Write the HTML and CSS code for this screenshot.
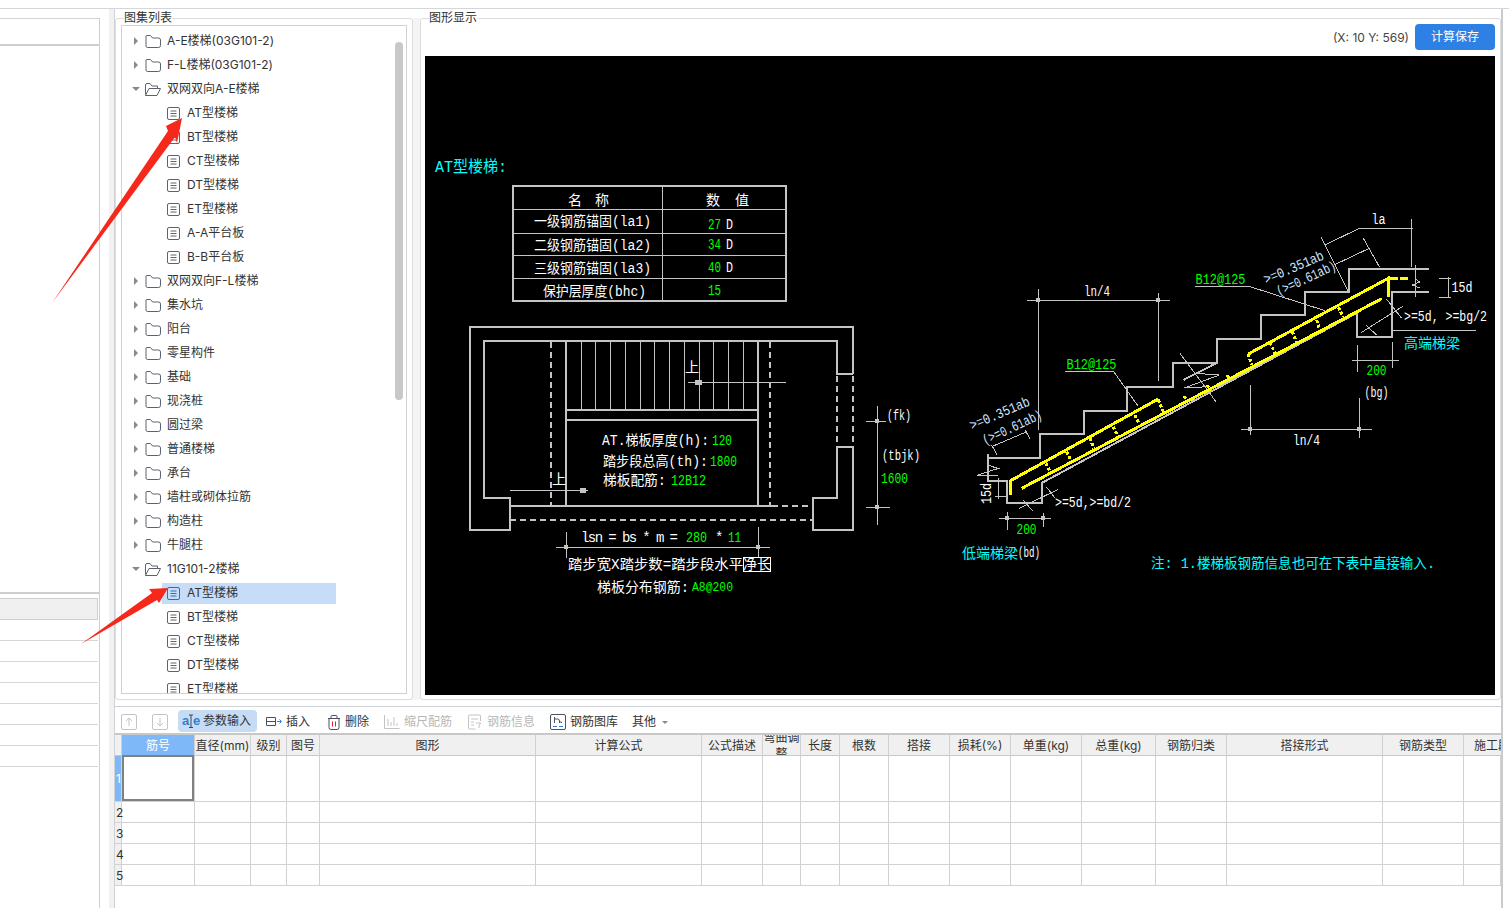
FILE: index.html
```html
<!DOCTYPE html>
<html lang="zh-CN">
<head>
<meta charset="utf-8">
<title>钢筋图库</title>
<link rel="stylesheet" href="styles.css">
</head>
<body>
<div class="app">
  <aside class="stub">
    <div class="stub-in">
      <div class="stub-top"></div>
      <div class="stub-table">
        <div class="stub-head"></div>
        <div class="stub-row"></div><div class="stub-row"></div><div class="stub-row"></div><div class="stub-row"></div>
        <div class="stub-row"></div><div class="stub-row"></div><div class="stub-row"></div>
      </div>
    </div>
  </aside>
  <div class="stub-gap"></div>
  <div class="sash"></div>
  <main class="main">
    <div class="top">
      <section class="panel tree-panel">
        <span class="legend">图集列表</span>
        <div class="tree">
          <div class="node"><svg class="caret"><use href="#i-right"/></svg><svg class="folder"><use href="#i-folder"/></svg><span>A-E楼梯(03G101-2)</span></div>
          <div class="node"><svg class="caret"><use href="#i-right"/></svg><svg class="folder"><use href="#i-folder"/></svg><span>F-L楼梯(03G101-2)</span></div>
          <div class="node"><svg class="caret caret-open"><use href="#i-down"/></svg><svg class="folder"><use href="#i-open"/></svg><span>双网双向A-E楼梯</span></div>
          <div class="leaf"><div class="leaf-in"><svg class="file"><use href="#i-file"/></svg><span>AT型楼梯</span></div></div>
          <div class="leaf"><div class="leaf-in"><svg class="file"><use href="#i-file"/></svg><span>BT型楼梯</span></div></div>
          <div class="leaf"><div class="leaf-in"><svg class="file"><use href="#i-file"/></svg><span>CT型楼梯</span></div></div>
          <div class="leaf"><div class="leaf-in"><svg class="file"><use href="#i-file"/></svg><span>DT型楼梯</span></div></div>
          <div class="leaf"><div class="leaf-in"><svg class="file"><use href="#i-file"/></svg><span>ET型楼梯</span></div></div>
          <div class="leaf"><div class="leaf-in"><svg class="file"><use href="#i-file"/></svg><span>A-A平台板</span></div></div>
          <div class="leaf"><div class="leaf-in"><svg class="file"><use href="#i-file"/></svg><span>B-B平台板</span></div></div>
          <div class="node"><svg class="caret"><use href="#i-right"/></svg><svg class="folder"><use href="#i-folder"/></svg><span>双网双向F-L楼梯</span></div>
          <div class="node"><svg class="caret"><use href="#i-right"/></svg><svg class="folder"><use href="#i-folder"/></svg><span>集水坑</span></div>
          <div class="node"><svg class="caret"><use href="#i-right"/></svg><svg class="folder"><use href="#i-folder"/></svg><span>阳台</span></div>
          <div class="node"><svg class="caret"><use href="#i-right"/></svg><svg class="folder"><use href="#i-folder"/></svg><span>零星构件</span></div>
          <div class="node"><svg class="caret"><use href="#i-right"/></svg><svg class="folder"><use href="#i-folder"/></svg><span>基础</span></div>
          <div class="node"><svg class="caret"><use href="#i-right"/></svg><svg class="folder"><use href="#i-folder"/></svg><span>现浇桩</span></div>
          <div class="node"><svg class="caret"><use href="#i-right"/></svg><svg class="folder"><use href="#i-folder"/></svg><span>圆过梁</span></div>
          <div class="node"><svg class="caret"><use href="#i-right"/></svg><svg class="folder"><use href="#i-folder"/></svg><span>普通楼梯</span></div>
          <div class="node"><svg class="caret"><use href="#i-right"/></svg><svg class="folder"><use href="#i-folder"/></svg><span>承台</span></div>
          <div class="node"><svg class="caret"><use href="#i-right"/></svg><svg class="folder"><use href="#i-folder"/></svg><span>墙柱或砌体拉筋</span></div>
          <div class="node"><svg class="caret"><use href="#i-right"/></svg><svg class="folder"><use href="#i-folder"/></svg><span>构造柱</span></div>
          <div class="node"><svg class="caret"><use href="#i-right"/></svg><svg class="folder"><use href="#i-folder"/></svg><span>牛腿柱</span></div>
          <div class="node"><svg class="caret caret-open"><use href="#i-down"/></svg><svg class="folder"><use href="#i-open"/></svg><span>11G101-2楼梯</span></div>
          <div class="leaf"><div class="leaf-in selected"><svg class="file file-sel"><use href="#i-file"/></svg><span>AT型楼梯</span></div></div>
          <div class="leaf"><div class="leaf-in"><svg class="file"><use href="#i-file"/></svg><span>BT型楼梯</span></div></div>
          <div class="leaf"><div class="leaf-in"><svg class="file"><use href="#i-file"/></svg><span>CT型楼梯</span></div></div>
          <div class="leaf"><div class="leaf-in"><svg class="file"><use href="#i-file"/></svg><span>DT型楼梯</span></div></div>
          <div class="leaf"><div class="leaf-in"><svg class="file"><use href="#i-file"/></svg><span>ET型楼梯</span></div></div>
          <div class="scrollbar"></div>
        </div>
      </section>
      <div class="divider"></div>
      <section class="panel view-panel">
        <span class="legend">图形显示</span>
        <div class="view-head">
          <span class="coords">(X: 10 Y: 569)</span>
          <button class="save">计算保存</button>
        </div>
        <svg class="cad" viewBox="425 56 1070 639" xmlns="http://www.w3.org/2000/svg">
          <g class="lt">
            <path class="t2" d="M513 186H786V301H513Z"/>
            <path class="t1" d="M662 186V301M513 209H786M513 233H786M513 255.500H786M513 278H786"/>
            <!-- plan -->
            <path class="t2" d="M853 374V327H470V530H510V498H484V341H836.500V374H853M510 498V530"/>
            <path class="t2" d="M853 447V530H813V498H836.500V447H853ZM813 498V530"/>
            <path class="t2 dash" d="M836.500 376V446M853 376V446M551 342V505M770 342V505M772 506H813M510 520H813"/>
            <path class="t2" d="M510 506H772M566 341V506M758 341V506M566 410H758M566 420H758"/>
            <path class="t1" d="M581.500 341V410M595.500 341V410M610.500 341V410M625.500 341V410M640.500 341V410M654.500 341V410M669.500 341V410M684.500 341V410M699.500 341V410M713.500 341V410M728.500 341V410M743.500 341V410"/>
            <path class="t1" d="M688 382H786M510 490H588M877 406V525M866 421H886M866 507H890M566 532V558M758 527V557M556 547H770"/>
            <path class="fill" d="M695 380h7v5h-7zM580 488h6v5h-6zM875 419h4v4h-4zM875 505h4v4h-4zM564 545h4v4h-4zM756 545h4v4h-4z"/>
            <!-- section stair -->
            <path class="t2" d="M987.700 454V481H1007.300V503H1041.700V483L1356.700 313V336.700H1392V292H1429M987.700 457.700H1040V434H1084V410.700H1126.700V387H1172.700V363H1216.700V339H1261V315H1305V292.300H1349V268.700H1429"/>
            <path class="t1" d="M1392 330H1476M1038.300 289V430M1158.300 292.700V380.700M1027.300 300H1170M1065 371H1113.300L1138 406M993.300 446L1026.700 431.700M991.500 445L997 454.500M1025 430L1030 438.500M976.700 475.500L998 468.500L987.700 465M976.700 475.500H998M998.300 477.700V499.300M995 496H1007M999.300 518.300H1050.700M1007.300 512V530M1043.300 513V527M1046.700 487.300L1055 498M1019.300 508.300L1058.300 489.300M1023 500L1032.700 511"/>
            <path class="t1" d="M1180 353.300L1216 401.700M1195 373.300L1219.300 375L1184.300 388L1208 386.700"/>
            <path class="t2" d="M1183.300 380L1216.700 363"/>
            <path class="t1" d="M1359.300 228.300H1413.300M1359.300 228.300L1325 245M1320.700 236.700L1347.700 290.700M1334 265L1369.300 248.300M1363.300 238.300L1379.300 266.700M1411.300 219.300V266.700M1415.700 265V296.700M1448.300 277.300V297.300M1439.300 278.300H1450.700M1439.300 297.300H1450.700M1386.700 299.300L1401.700 318.300M1361 332.700L1403.300 306M1365.700 325L1376.700 335M1357.300 345V371.700M1392.700 341.700V368.300M1352 360.300H1399M1250 385V435M1359.300 398V438.300M1241 429.300H1372M1195 286H1248L1325 310.700M1415 279L1420 282L1412 285L1420 288"/>
            <path class="fill" d="M1036.300 298h4v4h-4zM1156.300 298h4v4h-4zM1005.300 516.300h4v4h-4zM1041.300 516.300h4v4h-4zM1248 427.300h4v4h-4zM1357.300 427.300h4v4h-4z"/>
          </g>
          <g class="rebar">
            <path d="M1010 495V481L1158.300 399M1021.700 488.300L1381.700 298.700M1248.300 354L1388.300 278.300V297M1388.300 278.300H1398M1400 278.300H1408"/>
            <path class="tie" d="M1046 463.300L1050 471.700M1066.700 451.700L1070.700 460M1090 438.300L1094 448.300M1113.300 426.700L1117.700 436M1135 415L1139 424M1158.300 400L1163.300 411.700M1248.300 354L1251.700 365M1270 342.700L1275 353.300M1292.300 331.700L1296.700 342.700M1316.700 320L1320 330.700M1338.300 307.300L1343.300 316.700"/>
            <path class="tie" d="M1184 396L1186 399M1207 385L1209 388M1227 375L1229 378"/>
          </g>
          <g class="txt">
            <text class="cy s16" x="435" y="172" textLength="72" lengthAdjust="spacingAndGlyphs">AT型楼梯:</text>
            <text class="wh s14" x="568" y="205">名</text><text class="wh s14" x="595" y="205">称</text>
            <text class="wh s14" x="706" y="205">数</text><text class="wh s14" x="735" y="205">值</text>
            <text class="wh s14" x="534" y="226" textLength="117" lengthAdjust="spacingAndGlyphs">一级钢筋锚固(la1)</text>
            <text class="wh s14" x="534" y="250" textLength="117" lengthAdjust="spacingAndGlyphs">二级钢筋锚固(la2)</text>
            <text class="wh s14" x="534" y="273" textLength="117" lengthAdjust="spacingAndGlyphs">三级钢筋锚固(la3)</text>
            <text class="wh s14" x="543" y="296" textLength="103" lengthAdjust="spacingAndGlyphs">保护层厚度(bhc)</text>
            <text class="gr s14" x="708" y="229" textLength="13" lengthAdjust="spacingAndGlyphs">27</text><text class="wh s14" x="726" y="229" textLength="7" lengthAdjust="spacingAndGlyphs">D</text>
            <text class="gr s14" x="708" y="249" textLength="13" lengthAdjust="spacingAndGlyphs">34</text><text class="wh s14" x="726" y="249" textLength="7" lengthAdjust="spacingAndGlyphs">D</text>
            <text class="gr s14" x="708" y="272" textLength="13" lengthAdjust="spacingAndGlyphs">40</text><text class="wh s14" x="726" y="272" textLength="7" lengthAdjust="spacingAndGlyphs">D</text>
            <text class="gr s14" x="708" y="295" textLength="13" lengthAdjust="spacingAndGlyphs">15</text>
            <text class="wh s14" x="685" y="372">上</text>
            <text class="wh s14" x="552" y="484">上</text>
            <text class="wh s14" x="602" y="445" textLength="107" lengthAdjust="spacingAndGlyphs">AT.梯板厚度(h):</text><text class="gr s14" x="712" y="445" textLength="20" lengthAdjust="spacingAndGlyphs">120</text>
            <text class="wh s14" x="603" y="466" textLength="105" lengthAdjust="spacingAndGlyphs">踏步段总高(th):</text><text class="gr s14" x="710" y="466" textLength="27" lengthAdjust="spacingAndGlyphs">1800</text>
            <text class="wh s14" x="603" y="485" textLength="63" lengthAdjust="spacingAndGlyphs">梯板配筋:</text><text class="gr s14" x="671" y="485" textLength="35" lengthAdjust="spacingAndGlyphs">12B12</text>
            <text class="wh s14" x="887" y="420" textLength="24" lengthAdjust="spacingAndGlyphs">(fk)</text>
            <text class="wh s14" x="882" y="460" textLength="38" lengthAdjust="spacingAndGlyphs">(tbjk)</text>
            <text class="gr s14" x="881" y="483" textLength="27" lengthAdjust="spacingAndGlyphs">1600</text>
            <text class="wh s14" x="581" y="542" textLength="97" xml:space="preserve">lsn = bs * m =</text><text class="gr s14" x="686" y="542" textLength="21" lengthAdjust="spacingAndGlyphs">280</text><text class="wh s14" x="715" y="542">*</text><text class="gr s14" x="728" y="542" textLength="13" lengthAdjust="spacingAndGlyphs">11</text>
            <text class="wh s14" x="568" y="569" textLength="175" lengthAdjust="spacingAndGlyphs">踏步宽X踏步数=踏步段水平</text>
            <rect class="boxw" x="743.500" y="557.500" width="27" height="14"/>
            <text class="wh s14" x="743" y="569">净长</text>
            <text class="wh s14" x="597" y="592" textLength="92" lengthAdjust="spacingAndGlyphs">梯板分布钢筋:</text><text class="gr s12" x="692" y="591" textLength="41" lengthAdjust="spacingAndGlyphs">A8@200</text>

            <text class="wh s14" x="1084" y="296" textLength="26" lengthAdjust="spacingAndGlyphs">ln/4</text>
            <text class="gr s14" x="1066.500" y="369" textLength="50" lengthAdjust="spacingAndGlyphs">B12@125</text>
            <text class="bl s14" x="972" y="430" textLength="64" lengthAdjust="spacingAndGlyphs" transform="rotate(-23 972 430)">&gt;=0.351ab</text>
            <text class="bl s14" x="985" y="445" textLength="64" lengthAdjust="spacingAndGlyphs" transform="rotate(-25 985 445)">(&gt;=0.61ab)</text>
            <text class="wh s14" x="991" y="504" textLength="21" lengthAdjust="spacingAndGlyphs" transform="rotate(-90 991 504)">15d</text>
            <text class="gr s14" x="1016.500" y="534" textLength="20" lengthAdjust="spacingAndGlyphs">200</text>
            <text class="wh s14" x="1055" y="507" textLength="76" lengthAdjust="spacingAndGlyphs">&gt;=5d,&gt;=bd/2</text>
            <text class="cy s14" x="962" y="558">低端梯梁</text><text class="wh s14" x="1018" y="557" textLength="22" lengthAdjust="spacingAndGlyphs">(bd)</text>
            <text class="cy s14" x="1151" y="568" textLength="284" lengthAdjust="spacingAndGlyphs">注: 1.楼梯板钢筋信息也可在下表中直接输入.</text>

            <text class="wh s14" x="1371.500" y="224" textLength="14" lengthAdjust="spacingAndGlyphs">la</text>
            <text class="gr s14" x="1195.500" y="284" textLength="50" lengthAdjust="spacingAndGlyphs">B12@125</text>
            <text class="bl s14" x="1266" y="284" textLength="64" lengthAdjust="spacingAndGlyphs" transform="rotate(-23 1266 284)">&gt;=0.351ab</text>
            <text class="bl s14" x="1279" y="296" textLength="64" lengthAdjust="spacingAndGlyphs" transform="rotate(-25 1279 296)">(&gt;=0.61ab)</text>
            <text class="wh s14" x="1451.500" y="292" textLength="21" lengthAdjust="spacingAndGlyphs">15d</text>
            <text class="wh s14" x="1404" y="321" textLength="83" xml:space="preserve" lengthAdjust="spacingAndGlyphs">&gt;=5d, &gt;=bg/2</text>
            <text class="cy s14" x="1404" y="348">高端梯梁</text>
            <text class="gr s14" x="1366.500" y="375" textLength="20" lengthAdjust="spacingAndGlyphs">200</text>
            <text class="wh s14" x="1364.500" y="397" textLength="24" lengthAdjust="spacingAndGlyphs">(bg)</text>
            <text class="wh s14" x="1293" y="445" textLength="27" lengthAdjust="spacingAndGlyphs">ln/4</text>
          </g>
        </svg>
      </section>
    </div>
    <section class="bottom">
      <div class="toolbar">
        <span class="tool t-up"><svg class="ico16 off"><use href="#i-up"/></svg></span>
        <span class="tool t-dn"><svg class="ico16 off"><use href="#i-dn"/></svg></span>
        <span class="tool t-act"><svg class="ico-ae" viewBox="0 0 18 16"><text class="ae" x="0" y="12">a</text><path class="ae-i" d="M7 2h4M7 14.500h4M9 2v12.500"/><text class="ae" x="11" y="12">e</text></svg>参数输入</span>
        <span class="tool t-ins"><svg class="ico16"><path class="ln" d="M.5 3.500h9v8h-9zM.5 7.500h9"/><path class="bl-ln" d="M11 7.500h4M13.500 5.500l2 2-2 2"/></svg>插入</span>
        <span class="tool t-del"><svg class="ico16"><path class="ln" d="M2 4.500h12M5 4.500V2.500q0-1 1-1h4q1 0 1 1v2M3 4.500v9q0 2 2 2h6q2 0 2-2v-9"/><path class="red-ln" d="M6.500 7.500v5M9.500 7.500v5"/></svg>删除</span>
        <span class="tool t-off t-chart"><svg class="ico16 off"><path d="M.5 1v13.500h15M4 5v7M7 8v4M10 3v9M13 9v3"/></svg>缩尺配筋</span>
        <span class="tool t-off t-info"><svg class="ico16 off"><path d="M13.500 7V2q0-1-1-1h-10q-1 0-1 1v12q0 1 1 1h6M4 5h7M4 8h3M4 11h3M9 9h5l-2 2v3"/></svg>钢筋信息</span>
        <span class="tool t-lib"><svg class="ico16"><path class="ln" d="M2 .5h12q1.500 0 1.500 1.500v12q0 1.500-1.500 1.500H2Q.5 15.500.5 14V2Q.5.500 2 .5zM4.500 3v6M4.500 5h3q2 0 2 2v2M9.500 8h2v1"/><path class="bl-ln" d="M3 12.500h4M9 12.500h4"/></svg>钢筋图库</span>
        <span class="tool t-more">其他<i class="more-caret"></i></span>
      </div>
      <div class="grid">
        <div class="c hd"></div><div class="c hd cur">筋号</div><div class="c hd">直径(mm)</div><div class="c hd">级别</div><div class="c hd">图号</div><div class="c hd">图形</div><div class="c hd">计算公式</div><div class="c hd">公式描述</div><div class="c hd wrap">弯曲调整</div><div class="c hd">长度</div><div class="c hd">根数</div><div class="c hd">搭接</div><div class="c hd">损耗(%)</div><div class="c hd">单重(kg)</div><div class="c hd">总重(kg)</div><div class="c hd">钢筋归类</div><div class="c hd">搭接形式</div><div class="c hd">钢筋类型</div><div class="c hd clip">施工段</div>
        <div class="c num cur">1</div><div class="c active"></div><div class="c"></div><div class="c"></div><div class="c"></div><div class="c"></div><div class="c"></div><div class="c"></div><div class="c"></div><div class="c"></div><div class="c"></div><div class="c"></div><div class="c"></div><div class="c"></div><div class="c"></div><div class="c"></div><div class="c"></div><div class="c"></div><div class="c"></div>
        <div class="c num">2</div><div class="c"></div><div class="c"></div><div class="c"></div><div class="c"></div><div class="c"></div><div class="c"></div><div class="c"></div><div class="c"></div><div class="c"></div><div class="c"></div><div class="c"></div><div class="c"></div><div class="c"></div><div class="c"></div><div class="c"></div><div class="c"></div><div class="c"></div><div class="c"></div>
        <div class="c num">3</div><div class="c"></div><div class="c"></div><div class="c"></div><div class="c"></div><div class="c"></div><div class="c"></div><div class="c"></div><div class="c"></div><div class="c"></div><div class="c"></div><div class="c"></div><div class="c"></div><div class="c"></div><div class="c"></div><div class="c"></div><div class="c"></div><div class="c"></div><div class="c"></div>
        <div class="c num">4</div><div class="c"></div><div class="c"></div><div class="c"></div><div class="c"></div><div class="c"></div><div class="c"></div><div class="c"></div><div class="c"></div><div class="c"></div><div class="c"></div><div class="c"></div><div class="c"></div><div class="c"></div><div class="c"></div><div class="c"></div><div class="c"></div><div class="c"></div><div class="c"></div>
        <div class="c num">5</div><div class="c"></div><div class="c"></div><div class="c"></div><div class="c"></div><div class="c"></div><div class="c"></div><div class="c"></div><div class="c"></div><div class="c"></div><div class="c"></div><div class="c"></div><div class="c"></div><div class="c"></div><div class="c"></div><div class="c"></div><div class="c"></div><div class="c"></div><div class="c"></div>
      </div>
    </section>
  </main>
</div>
<svg class="arrows" viewBox="0 0 1509 908" xmlns="http://www.w3.org/2000/svg">
  <polygon points="52,303 168,131 166,126 182,118 177,143 175,137"/>
  <polygon points="81,644 152,593 149,589 168,588 159,603 157,600"/>
</svg>
<svg class="defs" xmlns="http://www.w3.org/2000/svg">
  <symbol id="i-right" viewBox="0 0 6 10"><path d="M1 1l4 4-4 4z"/></symbol>
  <symbol id="i-down" viewBox="0 0 8 6"><path d="M0 1h8L4 5z"/></symbol>
  <symbol id="i-folder" viewBox="0 0 16 13"><path d="M1.500.5h4l2 2.500h6q2 0 2 2v5.500q0 2-2 2h-11q-1.500 0-1.500-1.500V2q0-1.500.5-1.500z"/></symbol>
  <symbol id="i-open" viewBox="0 0 16 13"><path d="M.5 11.500V2q0-1.500 1.500-1.500h3l2 2.500h5.500v2.500M.5 12.500h11.500l3.500-7H4z"/></symbol>
  <symbol id="i-file" viewBox="0 0 13 13"><path d="M2 .5h9q1.500 0 1.500 1.500v9q0 1.500-1.500 1.500H2Q.5 12.500.5 11V2Q.5.500 2 .5zM3.500 4h6M3.500 6.500h6M3.500 9h6"/></symbol>
  <symbol id="i-up" viewBox="0 0 16 16"><path d="M2 .5h12q1.500 0 1.500 1.500v12q0 1.500-1.500 1.500H2Q.5 15.500.5 14V2Q.5.500 2 .5zM8 12V4M5 7l3-3 3 3"/></symbol>
  <symbol id="i-dn" viewBox="0 0 16 16"><path d="M2 .5h12q1.500 0 1.500 1.500v12q0 1.500-1.500 1.500H2Q.5 15.500.5 14V2Q.5.500 2 .5zM8 4v8M5 9l3 3 3-3"/></symbol>
</svg>
</body>
</html>
```

FILE: styles.css
```css
* { box-sizing: border-box; }
html, body { margin: 0; height: 908px; overflow: hidden; background: #fff; }
body { position: relative; font: 12px/16px Inter, "Noto Sans CJK SC", sans-serif; color: #333; }

.app { display: flex; height: 900px; margin-top: 8px; border-top: 1px solid #d3d6db; }

/* left stub */
.stub { width: 100px; flex: none; padding-top: 9px; }
.stub-in { height: 100%; border-right: 1px solid #cfcfcf; }
.stub-top { height: 28px; border-top: 1px solid #d4d4d4; border-bottom: 2px solid #cfcfcf; }
.stub-table { margin-top: 546px; border-top: 2px solid #cfcfcf; padding-top: 4px; }
.stub-head { height: 22px; background: #f0f0f0; border: 1px solid #cfcfcf; border-left: 0; margin-right: 1px; }
.stub-row { height: 21px; border-bottom: 1px solid #d6d6d6; margin-right: 1px; }
.stub-gap { width: 9px; flex: none; }
.sash { width: 5px; flex: none; background: #f1f1f1; }

/* main */
.main { width: 1389px; flex: none; border-left: 1px solid #cfd2d6; border-right: 2px solid #c8ccd0; display: flex; flex-direction: column; }
.top { display: flex; height: 697px; padding-top: 9px; flex: none; }
.panel { position: relative; height: 682px; border: 1px solid #dcdcdc; border-radius: 3px; }
.legend { position: absolute; top: -9px; left: 8px; background: #fff; line-height: 16px; color: #333; }
.tree-panel { width: 298px; flex: none; padding: 6px 5px; }
.divider { width: 7px; flex: none; background: #f4f4f4; height: 682px; }
.view-panel { width: 1081px; flex: none; padding: 5px 5px 4px 4px; }

/* tree */
.tree { position: relative; height: 669px; border: 1px solid #cdd2d6; overflow: hidden; padding-top: 3px; }
.node, .leaf { height: 24px; display: flex; align-items: center; white-space: nowrap; }
.node { padding-left: 11px; }
.leaf { padding-left: 40px; }
.leaf-in { display: flex; align-items: center; width: 174px; height: 21px; padding-left: 5px; }
.selected { background: #c6dcf7; }
.caret { width: 6px; height: 10px; fill: #8a8a8a; margin-right: 6px; }
.caret-open { width: 8px; height: 6px; margin: 0 5px 0 -1px; }
.folder { width: 16px; height: 13px; fill: none; stroke: #5b6270; margin-right: 6px; }
.file { width: 13px; height: 13px; fill: none; stroke: #5b6270; margin-right: 7px; }
.file-sel { stroke: #2f6fb5; }
.scrollbar { position: absolute; top: 16px; right: 3px; width: 8px; height: 358px; background: #c8c8c8; border-radius: 4px; }

/* view */
.view-head { display: flex; justify-content: flex-end; align-items: center; gap: 6px; height: 26px; margin-bottom: 6px; }
.coords { color: #444; padding-top: 2px; }
.save { width: 80px; height: 26px; border: 0; border-radius: 4px; background: #2f80e4; color: #fff; font: inherit; padding: 0; }
.cad { display: block; width: 1070px; height: 639px; background: #000; }
.lt path { fill: none; stroke: #c4c4c4; shape-rendering: crispEdges; }
.lt .t1 { stroke-width: 1; }
.lt .t2 { stroke-width: 2; }
.lt .dash { stroke-dasharray: 6 4; }
.lt .fill { fill: #c4c4c4; stroke: none; }
.rebar path { fill: none; stroke: #ffff00; stroke-width: 3; shape-rendering: crispEdges; }
.rebar .tie { stroke-width: 3; stroke-dasharray: 3 2; }
.txt text { font-family: "Liberation Mono", "Noto Sans CJK SC", monospace; }
.s16 { font-size: 16px; }
.s14 { font-size: 14px; }
.s12 { font-size: 12px; }
.cy { fill: #00ffff; }
.gr { fill: #00ff00; }
.wh { fill: #fff; }
.bl { fill: #cfe4ff; }
.boxw { fill: none; stroke: #fff; shape-rendering: crispEdges; }

/* bottom */
.bottom { flex: none; border-top: 1px solid #cfd2d6; }
.toolbar { display: flex; align-items: center; height: 26px; padding: 4px 0 0 6px; }
.tool { display: flex; align-items: center; gap: 4px; white-space: nowrap; }
.t-dn { margin-left: 15px; }
.t-act { margin: -2px 0 0 10px; width: 79px; height: 22px; padding-left: 4px; gap: 3px; background: #c6dcf4; border-radius: 4px; }
.t-ins { margin-left: 9px; }
.t-chart, .t-info, .t-lib { margin-left: 15px; }
.t-del { margin-left: 16px; gap: 3px; }
.t-more { margin-left: 14px; gap: 6px; }
.t-off { color: #b8b8b8; }
.ico16 { width: 16px; height: 16px; fill: none; stroke: #5b6270; flex: none; }
.ico16.off { stroke: #c4c4c4; }
.ico16 .ln { stroke: #4a5160; }
.bl-ln { stroke: #2f80e4; }
.red-ln { stroke: #e02020; }
.ico-ae { width: 18px; height: 16px; flex: none; }
.ae { font: bold 13px "Liberation Sans", sans-serif; fill: #2f7fd8; }
.ae-i { fill: none; stroke: #444; }
.more-caret { width: 0; height: 0; border: 3px solid transparent; border-top-color: #888; border-bottom: 0; }

.grid { display: grid; height: 153px; border-top: 2px solid #c8c8c8;
  grid-template-columns: 7px 73px 56px 36px 33px 216px 166px 61px 38px 39px 49px 61px 61px 71px 74px 71px 156px 81px 37px;
  grid-template-rows: 21px 46px 21px 21px 21px 21px; }
.c { border-right: 1px solid #d2d2d2; border-bottom: 1px solid #d2d2d2; overflow: hidden; }
.hd { display: flex; align-items: center; justify-content: center; padding-top: 1px; background: #f0f0f0; white-space: nowrap; border-bottom-color: #c8c8c8; border-right-color: #d0d0d0; }
.hd.wrap { white-space: normal; text-align: center; }
.hd.clip { justify-content: flex-start; padding-left: 10px; border-right: 0; }
.hd.cur { background: #7fb8f8; color: #fff; }
.num { display: flex; align-items: center; padding-top: 1px; background: #f0f0f0; padding-left: 1px; font-size: 12px; overflow: visible; }
.num.cur { background: #7fb8f8; color: #fff; }
.active { margin-top: -1px; box-shadow: inset 0 0 0 2px #808080; }

/* overlay annotations */
.arrows { position: absolute; left: 0; top: 0; width: 1509px; height: 908px; pointer-events: none; }
.arrows polygon { fill: #f6281c; }
.defs { position: absolute; width: 0; height: 0; }
```
